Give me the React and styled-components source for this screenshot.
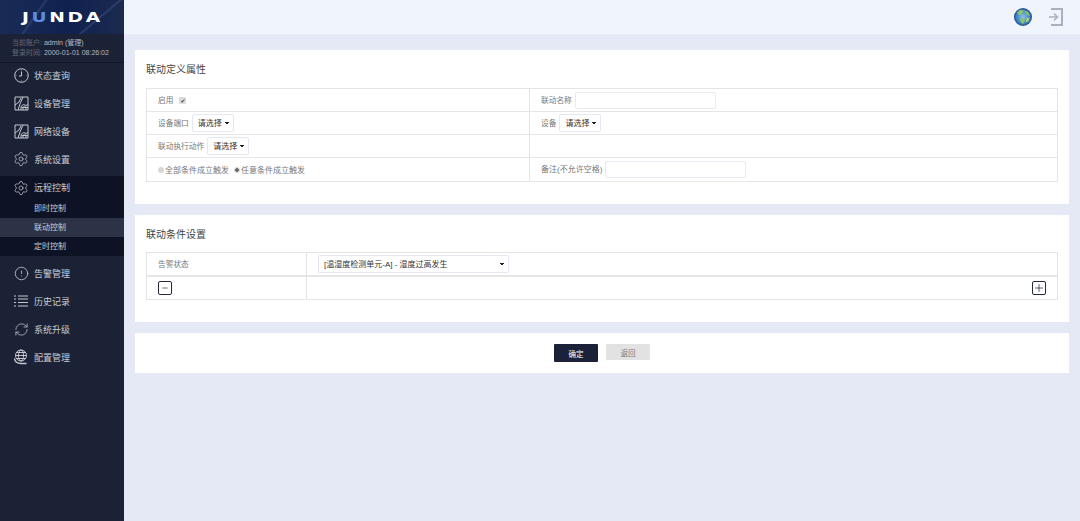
import React from 'react'
import styled, { createGlobalStyle } from 'styled-components'
import { Settings, AlertCircle, RefreshCw, Plus, Minus } from 'lucide-react'

const GlobalStyle = createGlobalStyle`
   html, body { margin: 0; padding: 0; height: 100%; overflow: hidden; }
   body { font-family: "Liberation Sans", "Noto Sans CJK SC", sans-serif; background: #e4e9f5; }
   #root { height: 100%; }
`

const ClockIcon = () => (
   <svg width="15" height="15" viewBox="0 0 15 15" fill="none" stroke="#c4c7cf" strokeWidth="1">
      <circle cx="7.500" cy="7.500" r="6.800" />
      <path d="M7.500 3.500v4.500H5" />
      <path d="M7.500 1.500v1M13.500 7.500h-1M7.500 13.500v-1M1.500 7.500h1" strokeWidth=".7" />
   </svg>
)

const DeviceIcon = () => (
   <svg width="15" height="15" viewBox="0 0 15 15" fill="none" stroke="#c4c7cf" strokeWidth="1">
      <path d="M1 1h13v13H1z" />
      <path d="M1 9l4-3 2-4M9 1L6 8l-2 6" />
      <path d="M7 14V10.500l2.500-2 2.500 1 2 -1M9 14v-3h3v3M7.500 11.500h6.500" />
   </svg>
)

const ListIcon = () => (
   <svg width="14" height="12" viewBox="0 0 14 12" fill="none" stroke="#c4c7cf" strokeWidth="1">
      <path d="M0 1h2M4 1h10M0 4h2M4 4h10M0 7.500h2M4 7.500h10M0 11h2M4 11h10" />
   </svg>
)

const GlobeLinesIcon = () => (
   <svg width="16" height="16" viewBox="0 0 16 16" fill="none" stroke="#c4c7cf" strokeWidth="1">
      <circle cx="8" cy="6.500" r="5.500" />
      <ellipse cx="8" cy="6.500" rx="2.500" ry="5.500" />
      <path d="M2.500 6.500h11M3.300 3.500h9.400M3.300 9.500h9.400" />
      <path d="M1.500 9.500c.5 3.500 3.500 5 6.500 5h5.500" strokeWidth="1.500" />
   </svg>
)

const Earth = () => (
   <svg width="18" height="18" viewBox="0 0 18 18">
      <defs>
         <radialGradient id="sea" cx="50%" cy="50%" r="55%">
            <stop offset="0%" stopColor="#8cc4e6" />
            <stop offset="65%" stopColor="#3f86c4" />
            <stop offset="100%" stopColor="#1c2f6e" />
         </radialGradient>
      </defs>
      <circle cx="9" cy="9" r="9" fill="url(#sea)" />
      <path d="M3 4.500l3-2.500 4 .5-1.500 2-1.500 2.500-2.500-.5zM10 2.500l4 1.500 2 4-2.500-1-2-2zM6 11l3-1 2 2.500-2 3.500-2-1.500z" fill="#8fc46a" />
      <path d="M12.500 10l3-.5-1 4-2.500.5z" fill="#a7cf7e" />
   </svg>
)

const LogoutIcon = () => (
   <svg width="15" height="18" viewBox="0 0 15 18" fill="none" stroke="#aab0bf" strokeWidth="2">
      <path d="M3 1h11v16H3" />
      <path d="M1 9h8M6 5.500L9.500 9 6 12.500" strokeWidth="1.500" />
   </svg>
)

const navTop = [
   { label: '状态查询', icon: <ClockIcon /> },
   { label: '设备管理', icon: <DeviceIcon /> },
   { label: '网络设备', icon: <DeviceIcon /> },
   { label: '系统设置', icon: <Settings size={16} strokeWidth={1.100} /> },
]

const navBottom = [
   { label: '告警管理', icon: <AlertCircle size={15} strokeWidth={1.300} /> },
   { label: '历史记录', icon: <ListIcon /> },
   { label: '系统升级', icon: <RefreshCw size={15} strokeWidth={1.200} /> },
   { label: '配置管理', icon: <GlobeLinesIcon /> },
]

const subItems = ['即时控制', '联动控制', '定时控制']

function App() {
   return (
      <>
      <GlobalStyle />
      <Page>
         <Sidebar>
            <LogoBar>
               <Logo>J<LogoAccent>U</LogoAccent>NDA</Logo>
            </LogoBar>
            <UserInfo>
               <div><InfoKey>当前账户:</InfoKey> admin (管理)</div>
               <div><InfoKey>登录时间:</InfoKey> 2000-01-01 08:26:02</div>
            </UserInfo>
            <Nav>
               {navTop.map(item => (
                  <NavItem key={item.label}><NavIcon>{item.icon}</NavIcon>{item.label}</NavItem>
               ))}
               <NavGroup>
                  <NavItem $compact><NavIcon><Settings size={16} strokeWidth={1.100} /></NavIcon>远程控制</NavItem>
                  {subItems.map((label, index) => (
                     <SubItem key={label} $active={index === 1}>{label}</SubItem>
                  ))}
               </NavGroup>
               {navBottom.map(item => (
                  <NavItem key={item.label}><NavIcon>{item.icon}</NavIcon>{item.label}</NavItem>
               ))}
            </Nav>
         </Sidebar>
         <Main>
            <Header>
               <Earth />
               <LogoutIcon />
            </Header>
            <Content>
               <Card $height={154}>
                  <CardTitle $height={38}>联动定义属性</CardTitle>
                  <Table>
                     <Row $cols="382px 1fr">
                        <Cell>
                           <Label>启用</Label>
                           <Check type="checkbox" defaultChecked />
                        </Cell>
                        <Cell>
                           <Label>联动名称</Label>
                           <TextInput $width={141} />
                        </Cell>
                     </Row>
                     <Row $cols="382px 1fr">
                        <Cell>
                           <Label>设备端口</Label>
                           <Select $width={42}><option>请选择</option></Select>
                        </Cell>
                        <Cell>
                           <Label>设备</Label>
                           <Select $width={42}><option>请选择</option></Select>
                        </Cell>
                     </Row>
                     <Row $cols="382px 1fr">
                        <Cell>
                           <Label>联动执行动作</Label>
                           <Select $width={42}><option>请选择</option></Select>
                        </Cell>
                        <Cell />
                     </Row>
                     <Row $cols="382px 1fr" $tall>
                        <Cell>
                           <RadioLabel><Radio type="radio" name="trigger" />全部条件成立触发</RadioLabel>
                           <RadioLabel><Radio type="radio" name="trigger" defaultChecked />任意条件成立触发</RadioLabel>
                        </Cell>
                        <Cell>
                           <Label $size={8}>备注(不允许空格)</Label>
                           <TextInput $width={141} />
                        </Cell>
                     </Row>
                  </Table>
               </Card>
               <Card $height={107}>
                  <CardTitle $height={37}>联动条件设置</CardTitle>
                  <Table>
                     <Row $cols="159px 1fr" $thick>
                        <Cell><Label>告警状态</Label></Cell>
                        <Cell $pad={11}>
                           <Select $width={191}><option>[温湿度检测单元-A] - 湿度过高发生</option></Select>
                        </Cell>
                     </Row>
                     <Row $cols="159px 1fr">
                        <Cell><IconButton><Minus size={8} strokeWidth={2} /></IconButton></Cell>
                        <Cell $end><IconButton><Plus size={14} strokeWidth={1.500} /></IconButton></Cell>
                     </Row>
                  </Table>
               </Card>
               <ActionCard>
                  <Button $primary>确定</Button>
                  <Button>返回</Button>
               </ActionCard>
            </Content>
         </Main>
      </Page>
      </>
   )
}

const Page = styled.div`
   display: flex;
   height: 521px;
   width: 1080px;
`

const Sidebar = styled.aside`
   width: 124px;
   flex: none;
   background: #1c2235;
   color: #c9ccd4;
`

const LogoBar = styled.div`
   height: 34px;
   display: flex;
   align-items: center;
   justify-content: center;
   background:
      linear-gradient(125deg, transparent 30%, rgba(120, 150, 200, .22) 31%, transparent 33%),
      linear-gradient(140deg, transparent 72%, rgba(120, 150, 200, .25) 73%, transparent 75%),
      linear-gradient(90deg, #1a2c55, #102150 55%, #1b2a4e);
`

const Logo = styled.div`
   font-family: "DejaVu Sans", sans-serif;
   font-weight: bold;
   font-size: 14px;
   letter-spacing: 2px;
   color: #fff;
   transform: scaleX(1.330);
`

const LogoAccent = styled.span`
   color: #5a8ce6;
`

const UserInfo = styled.div`
   height: 29px;
   box-sizing: border-box;
   padding: 4px 0 0 12px;
   border-bottom: 1px solid #12172a;
   font-size: 7px;
   line-height: 10px;
   color: #b4b8c4;
`

const InfoKey = styled.span`
   color: #62687a;
`

const Nav = styled.nav`
   margin-top: -2px;
`

const NavItem = styled.div`
   display: flex;
   align-items: center;
   height: ${props => props.$compact ? '23px' : '28px'};
   padding-left: 13px;
   font-size: 9px;
   color: #c9ccd4;
`

const NavIcon = styled.span`
   display: flex;
   justify-content: center;
   width: 16px;
   margin-right: 5px;
   color: #c4c7cf;
`

const NavGroup = styled.div`
   margin: 3px 0;
   background: #0d1224;
`

const SubItem = styled.div`
   height: 19px;
   line-height: 19px;
   padding-left: 34px;
   font-size: 8px;
   color: #c9ccd4;
   background: ${props => props.$active ? '#2d3347' : 'transparent'};
`

const Main = styled.main`
   flex: 1;
   min-width: 0;
`

const Header = styled.header`
   height: 34px;
   display: flex;
   align-items: center;
   justify-content: flex-end;
   gap: 16px;
   padding-right: 17px;
   background: #eff4fd;
`

const Content = styled.div`
   display: flex;
   flex-direction: column;
   gap: 11px;
   padding: 16px 11px 0 11px;
`

const Card = styled.section`
   box-sizing: border-box;
   height: ${props => props.$height}px;
   padding: 0 11px;
   background: #fff;
`

const CardTitle = styled.h2`
   margin: 0;
   height: ${props => props.$height}px;
   padding-top: 2px;
   box-sizing: border-box;
   line-height: 36px;
   font-size: 10px;
   font-weight: normal;
   color: #444;
`

const Table = styled.div`
   border: 1px solid #e4e4e4;
   border-bottom: 0;
`

const Row = styled.div`
   display: grid;
   grid-template-columns: ${props => props.$cols};
   height: ${props => props.$tall ? '23px' : '22px'};
   border-bottom: ${props => props.$thick ? '2px' : '1px'} solid #e6e6e6;
`

const Cell = styled.div`
   display: flex;
   align-items: center;
   justify-content: ${props => props.$end ? 'flex-end' : 'flex-start'};
   gap: 3px;
   padding: 0 ${props => props.$end ? '11px' : '0'} 0 ${props => props.$pad || 11}px;
   & + & { border-left: 1px solid #e4e4e4; }
`

const Label = styled.span`
   position: relative;
   top: -1px;
   font-size: ${props => props.$size || 7.7}px;
   color: #777;
   white-space: nowrap;
`

const RadioLabel = styled.label`
   display: inline-flex;
   align-items: center;
   font-size: 8px;
   color: #777;
   margin-right: 2px;
   white-space: nowrap;
`

const Check = styled.input`
   appearance: none;
   display: flex;
   align-items: center;
   justify-content: center;
   width: 7px;
   height: 7px;
   margin: 0 0 0 3px;
   border-radius: 1px;
   background: #dcdcdc;
   &:checked::after {
      content: '✔';
      font-family: "DejaVu Sans", sans-serif;
      font-size: 6px;
      line-height: 7px;
      color: #444;
   }
`

const Radio = styled.input`
   appearance: none;
   width: 6px;
   height: 6px;
   margin: 0 1px 0 0;
   border-radius: 50%;
   background: #d8d8d8;
   &:checked { background: radial-gradient(circle, #666 35%, #d8d8d8 50%); }
`

const TextInput = styled.input`
   box-sizing: border-box;
   width: ${props => props.$width}px;
   height: 17px;
   border: 1px solid #e8ebf2;
   border-radius: 2px;
   background: #fff;
   outline: none;
`

// the native arrow is too big at this size, so it is drawn with two gradients
const Select = styled.select`
   appearance: none;
   box-sizing: border-box;
   width: ${props => props.$width}px;
   height: 18px;
   padding: 0 0 0 5px;
   border: 1px solid #e4e8f0;
   border-radius: 2px;
   background-color: #fff;
   background-image:
      linear-gradient(45deg, transparent 50%, #222 50%),
      linear-gradient(-45deg, transparent 50%, #222 50%);
   background-size: 2px 3px, 2px 3px;
   background-position: calc(100% - 6px) 50%, calc(100% - 4px) 50%;
   background-repeat: no-repeat;
   font-family: "Liberation Sans", "Noto Sans CJK SC", sans-serif;
   font-size: 8px;
   color: #333;
`

const IconButton = styled.button`
   box-sizing: border-box;
   display: flex;
   align-items: center;
   justify-content: center;
   width: 14px;
   height: 14px;
   padding: 0;
   border: 1.500px solid #252a3d;
   border-radius: 2px;
   background: #fff;
   color: #252a3d;
`

const ActionCard = styled.section`
   display: flex;
   justify-content: center;
   align-items: flex-start;
   gap: 8px;
   height: 40px;
   box-sizing: border-box;
   padding: 11px 0 0 0;
   background: #fff;
`

const Button = styled.button`
   width: 44px;
   height: ${props => props.$primary ? '18px' : '16px'};
   padding: 0;
   border: 0;
   border-radius: 1px;
   background: ${props => props.$primary ? '#1a2138' : '#e2e2e2'};
   color: ${props => props.$primary ? '#fff' : '#777'};
   font-family: "Noto Sans CJK SC", sans-serif;
   font-size: 7.500px;
`

export default App
